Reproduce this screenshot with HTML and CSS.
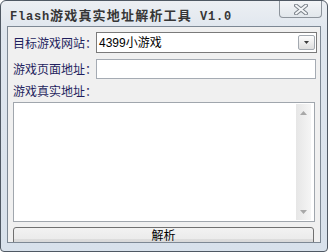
FILE: index.html
```html
<!DOCTYPE html>
<html lang="zh-CN">
<head>
    <meta charset="UTF-8">
    <title>Flash游戏真实地址解析工具 V1.0</title>
    <link rel="stylesheet" href="styles.css">
</head>
<body>
    <div class="window">
        <div class="titlebar">
            <div class="title"><span class="latin">Flash</span>游戏真实地址解析工具<span class="latin"> V1.0</span></div>
            <div class="close">
                <svg width="14" height="11" viewBox="0 0 14 11">
                    <path d="M2 1.5 L12 9.5 M12 1.5 L2 9.5" stroke="#7d848c" stroke-width="4" stroke-linecap="round"/>
                    <path d="M2 1.5 L12 9.5 M12 1.5 L2 9.5" stroke="#f4f6f8" stroke-width="2" stroke-linecap="round"/>
                </svg>
            </div>
        </div>
        <div class="client">
            <div class="row">
                <div class="label">目标游戏网站：</div>
                <div class="combo">
                    <span class="combo-text">4399小游戏</span>
                    <span class="drop">
                        <svg width="5" height="3" viewBox="0 0 5 3"><path d="M0 0 H5 L2.5 3 Z" fill="#3a3a3a"/></svg>
                    </span>
                </div>
            </div>
            <div class="row row-second">
                <div class="label">游戏页面地址：</div>
                <div class="field"></div>
            </div>
            <div class="label label-line">游戏真实地址：</div>
            <div class="memo">
                <div class="scrollbar">
                    <svg width="7" height="4" viewBox="0 0 7 4"><path d="M0 4 L3.5 0 L7 4 Z" fill="#a8a8a8"/></svg>
                    <svg width="7" height="4" viewBox="0 0 7 4"><path d="M0 0 H7 L3.5 4 Z" fill="#a8a8a8"/></svg>
                </div>
            </div>
            <div class="go">解析</div>
        </div>
    </div>
</body>
</html>
```

FILE: styles.css
```css
body { margin: 0; font-family: "Liberation Sans", "Noto Sans CJK SC", sans-serif; font-size: 12px; }
.window {
    width: 328px; height: 252px; box-sizing: border-box;
    border: 1px solid #4f5863; border-radius: 6px 6px 4px 4px;
    background: linear-gradient(#eceff3, #dfe6ee 30px, #d8e1eb);
    padding: 0 6px 8px 6px;
    overflow: hidden;
}
.titlebar { height: 25px; display: flex; justify-content: space-between; margin: 0 -1px 0 -6px; }
.title { padding: 6px 0 0 9px; line-height: 16px; font-size: 13px; font-weight: bold; color: #363636; letter-spacing: 1.2px; font-family: "Noto Sans CJK SC", sans-serif; white-space: nowrap; }
.title .latin { font-family: "Liberation Mono", monospace; font-size: 12px; letter-spacing: 0.8px; }
.close {
    width: 43px; height: 17px; box-sizing: border-box; flex-shrink: 0;
    border: 1px solid #8d949c; border-top: none; border-radius: 0 0 4px 4px;
    background: linear-gradient(#f3f5f7, #e2e7ec);
    display: flex; align-items: center; justify-content: center;
}
.client {
    height: 217px; box-sizing: border-box;
    border: 1px solid #7d8894; background: #f0f0f0;
    padding: 5px 0 0 5px; overflow: hidden;
}
.row { display: flex; align-items: center; }
.row-second { margin-top: 6px; }
.label { color: #1f1f5e; font-family: "Noto Sans CJK SC", sans-serif; font-size: 12px; line-height: 16px; white-space: nowrap; }
.row .label { width: 83px; flex-shrink: 0; }
.combo {
    width: 221px; height: 21px; box-sizing: border-box; flex-shrink: 0;
    border: 1px solid #7a7a7a; background: #fff;
    display: flex; align-items: center; justify-content: space-between;
    padding: 0 1px 0 2px;
}
.combo-text { color: #000; line-height: 16px; }
.drop {
    width: 17px; height: 15px; box-sizing: border-box;
    border: 1px solid #a3a9b0; border-radius: 2px;
    background: linear-gradient(#fdfdfd, #dedede);
    display: flex; align-items: center; justify-content: center;
}
.field { width: 220px; height: 20px; box-sizing: border-box; flex-shrink: 0; border: 1px solid #a5abb3; background: #fff; }
.label-line { margin-top: 4px; }
.memo {
    width: 302px; height: 120px; margin-top: 3px; box-sizing: border-box;
    border: 1px solid #a0a6ad; background: #fff;
    display: flex; justify-content: flex-end; padding: 1px 3px 1px 0;
}
.scrollbar {
    width: 15px; background: linear-gradient(90deg, #e6e6e6, #f5f5f5);
    display: flex; flex-direction: column; justify-content: space-between; align-items: center;
    padding: 7px 0 6px; box-sizing: border-box;
}
.go {
    width: 301px; height: 24px; margin-top: 5px; box-sizing: border-box;
    border: 1px solid #707070; border-radius: 3px;
    background: linear-gradient(#f2f2f2 0%, #ebebeb 50%, #dddddd 50%, #cfcfcf 100%);
    text-align: center; line-height: 14px; color: #000;
    font-family: "Noto Sans CJK SC", sans-serif;
}
```
